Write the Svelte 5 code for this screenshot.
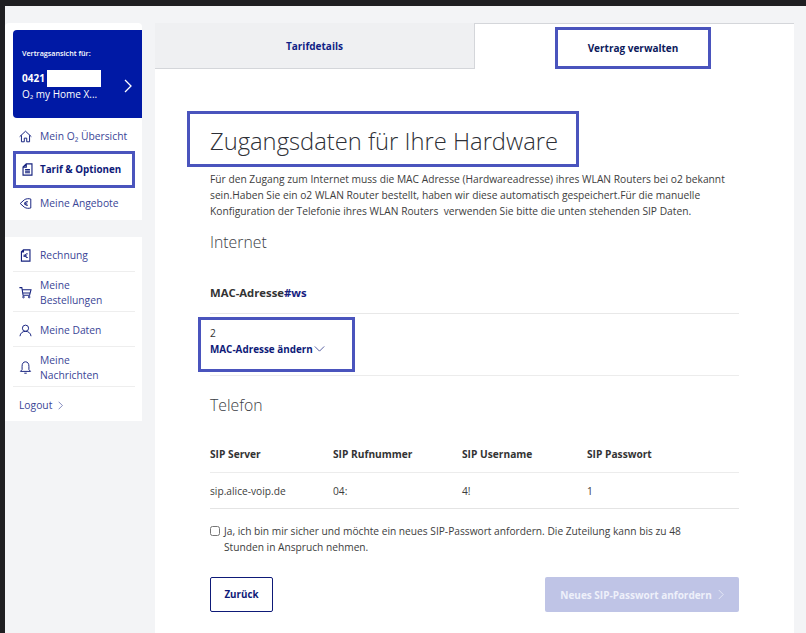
<script>
  const topLinks = [
    { label: 'Mein O₂ Übersicht', icon: 'home' },
    { label: 'Tarif & Optionen', icon: 'doc', active: true },
    { label: 'Meine Angebote', icon: 'tag' }
  ];
  const bottomLinks = [
    { label: 'Rechnung', icon: 'bill' },
    { label: 'Meine Bestellungen', icon: 'cart', two: true },
    { label: 'Meine Daten', icon: 'user' },
    { label: 'Meine Nachrichten', icon: 'bell', two: true }
  ];
  const sipHead = ['SIP Server', 'SIP Rufnummer', 'SIP Username', 'SIP Passwort'];
  const sipRow = ['sip.alice-voip.de', '04:', '4!', '1'];
</script>

{#snippet icon(name)}
  <svg class="ico" viewBox="0 0 16 16" fill="none" stroke="currentColor" stroke-width="1.2">
    {#if name === 'home'}
      <path d="M.8 8.2 8 1.5 15.2 8.2M3 6.5V14.5H6.5V10H9.5V14.5H13V6.5" />
    {:else if name === 'doc'}
      <path d="M6.5 1H13.5V15H2.5V5ZM6.5 1V5H2.5M5 8H11M5 10H11M5 12H11" stroke-width="1.4" />
    {:else if name === 'tag'}
      <path d="M1.5 8 6.5 3.5C9 1.8 12 1.8 14.5 2.5V13.5C12 14.2 9 14.2 6.5 12.5Z" />
      <path d="M11 6A2.4 2.4 0 1 0 11 10M6.5 7.4H10M6.5 8.8H10" />
    {:else if name === 'bill'}
      <path d="M5.5 1H13.5V15H3V3.5ZM5.5 1V3.5H3" stroke-width="1.4" />
      <path d="M10.8 6A2.4 2.4 0 1 0 10.8 10.4M5.5 7.6H9.5M5.5 9H9.5" />
    {:else if name === 'cart'}
      <path d="M.5 2H3.5L5 11.5H13L14.8 4.5H3.9M4.6 8.5H13.8" stroke-width="1.3" />
      <circle cx="5.5" cy="13.6" r="1" />
      <circle cx="12.5" cy="13.6" r="1" />
    {:else if name === 'user'}
      <circle cx="8" cy="5.2" r="3.8" />
      <path d="M1.2 15C1.6 11.2 4.5 9 8 9S14.4 11.2 14.8 15" />
    {:else if name === 'bell'}
      <path d="M8 1C5 1 3.8 3.5 3.8 6.5V10.5L1.8 12.8H14.2L12.2 10.5V6.5C12.2 3.5 11 1 8 1ZM6.5 15H9.5" />
    {/if}
  </svg>
{/snippet}

{#snippet chevron(cls)}
  <svg class={cls} viewBox="0 0 8 14" fill="none" stroke="currentColor" stroke-width="1"><path d="M1 1 7 7 1 13" /></svg>
{/snippet}

<div class="topbar"></div>
<div class="page">
  <aside class="side">
    <div class="card first">
      <div class="contract">
        <div class="small">Vertragsansicht für:</div>
        <div class="contract-row">
          <div>
            <div class="num">0421<span class="mask"></span></div>
            <div class="plan">O₂ my Home X...</div>
          </div>
          {@render chevron('contract-arrow')}
        </div>
      </div>
      {#each topLinks as link}
        <a class="link" class:active={link.active} href="#top">
          {@render icon(link.icon)}
          <span>{link.label}</span>
        </a>
      {/each}
    </div>

    <div class="card second">
      {#each bottomLinks as link}
        <a class="link row" class:two={link.two} href="#top">
          {@render icon(link.icon)}
          <span>{link.label}</span>
        </a>
      {/each}
      <a class="logout" href="#top">Logout {@render chevron('logout-arrow')}</a>
    </div>
  </aside>

  <main class="main">
    <div class="tabs">
      <div class="tab off"><span>Tarifdetails</span></div>
      <div class="tab on"><span class="tab-box">Vertrag verwalten</span></div>
    </div>

    <div class="content">
      <h1>Zugangsdaten für Ihre Hardware</h1>
      <p class="intro">
        Für den Zugang zum Internet muss die MAC Adresse (Hardwareadresse) ihres WLAN Routers bei o2 bekannt
        sein.Haben Sie ein o2 WLAN Router bestellt, haben wir diese automatisch gespeichert.Für die manuelle
        Konfiguration der Telefonie ihres WLAN Routers&nbsp; verwenden Sie bitte die unten stehenden SIP Daten.
      </p>

      <h2>Internet</h2>
      <div class="mac-head"><b>MAC-Adresse</b><b class="blue">#ws</b></div>
      <div class="mac-row">
        <div class="mac-box">
          <div class="mac-val">2</div>
          <a class="mac-link" href="#top">MAC-Adresse ändern
            <svg class="mac-arrow" viewBox="0 0 12 7" fill="none" stroke="currentColor" stroke-width="0.8"><path d="M.5 .5 6 6 11.5 .5" /></svg>
          </a>
        </div>
      </div>

      <h2 class="tel">Telefon</h2>
      <div class="sip head">
        {#each sipHead as h}<b>{h}</b>{/each}
      </div>
      <div class="sip body">
        {#each sipRow as v}<span>{v}</span>{/each}
      </div>

      <label class="check">
        <input type="checkbox" />
        <span>Ja, ich bin mir sicher und möchte ein neues SIP-Passwort anfordern. Die Zuteilung kann bis zu 48 Stunden in Anspruch nehmen.</span>
      </label>

      <div class="actions">
        <button class="back">Zurück</button>
        <button class="submit" disabled>Neues SIP-Passwort anfordern {@render chevron('submit-arrow')}</button>
      </div>
    </div>
  </main>
</div>

<style>
  :global(body) {
    margin: 0;
    background: #f3f4f6;
    font-family: "Open Sans", "Liberation Sans", sans-serif;
    color: #333;
    overflow: hidden;
  }

  a {
    color: inherit;
    text-decoration: none;
  }

  .topbar {
    height: 6px;
    background: #1f1f22;
  }

  .page {
    display: flex;
    height: 627px;
    border-left: 5px solid #1f1f22;
    box-sizing: border-box;
    padding-top: 17px;
  }

  .side {
    width: 137px;
    flex: none;
    display: flex;
    flex-direction: column;
    gap: 17px;
  }

  .card {
    background: #fff;
    border-radius: 4px 4px 0 0;
  }

  .first {
    padding: 7px 0 0 8px;
    height: 197px;
    box-sizing: border-box;
  }

  .contract {
    background: #0019a5;
    color: #fff;
    height: 88px;
    border-radius: 4px 0 0 4px;
    padding: 17px 9px;
    box-sizing: border-box;
    margin-bottom: 3px;
  }

  .small {
    font-size: 7.2px;
    font-weight: 600;
    line-height: 12px;
  }

  .contract-row {
    display: flex;
    justify-content: space-between;
    align-items: center;
    margin-top: 11px;
  }

  .num {
    font-size: 10px;
    font-weight: 700;
    line-height: 16px;
    display: flex;
  }

  .mask {
    width: 54px;
    height: 17px;
    background: #fff;
    margin-left: 2px;
  }

  .plan {
    font-size: 10px;
    line-height: 15px;
  }

  .contract-arrow {
    width: 8px;
    height: 14px;
    stroke-width: 1.3;
    margin-right: 1px;
  }

  .link {
    display: flex;
    align-items: center;
    gap: 8px;
    height: 30px;
    margin-right: 7px;
    padding-left: 6px;
    font-size: 10.3px;
    color: #3a4596;
    box-sizing: border-box;
  }

  .ico {
    width: 13px;
    height: 13px;
    flex: none;
    color: #16227f;
  }

  .link.active {
    height: 37px;
    border: 3px solid #4a54bd;
    padding-left: 5px;
    gap: 6px;
    font-size: 9.8px;
    color: #0e1a78;
    font-weight: 700;
  }

  .second {
    height: 184px;
    padding: 0 7px 0 8px;
    box-sizing: border-box;
    border-radius: 0;
  }

  .row {
    margin-right: 0;
    height: 35px;
    border-bottom: 1px solid #eee;
    padding: 2px 20px 0 6px;
    line-height: 15px;
  }

  .row.two {
    height: 40px;
  }

  .logout {
    display: flex;
    align-items: center;
    gap: 6px;
    height: 34px;
    padding: 2px 0 0 6px;
    box-sizing: border-box;
    font-size: 10.3px;
    color: #3a4596;
  }

  .logout-arrow {
    width: 5px;
    height: 9px;
  }

  .main {
    margin-left: 13px;
    width: 639px;
    flex: none;
    background: #fff;
    align-self: stretch;
  }

  .tabs {
    display: flex;
    height: 46px;
  }

  .tab {
    flex: 1;
    display: flex;
    justify-content: center;
    box-sizing: border-box;
    font-size: 10px;
    font-weight: 700;
  }

  .off {
    width: 320px;
    flex: none;
    background: #eff0f2;
    border-bottom: 1px solid #d4d6da;
    border-right: 1px solid #d4d6da;
    color: #101f86;
    padding-top: 16px;
  }

  .on {
    border-top: 1px solid #d4d6da;
    color: #0d1a5c;
    padding: 3px 3px 0 0;
  }

  .tab-box {
    width: 156px;
    height: 42px;
    border: 3px solid #4a54bd;
    box-sizing: border-box;
    display: flex;
    align-items: center;
    justify-content: center;
  }

  .content {
    padding: 42px 55px 0 55px;
  }

  h1 {
    margin: 0 0 0 -23px;
    width: 392px;
    height: 56px;
    border: 3px solid #4a54bd;
    box-sizing: border-box;
    padding-left: 20px;
    font-size: 23.75px;
    font-weight: 300;
    line-height: 54px;
    color: #2d2f36;
  }

  .intro {
    margin: 4px 0 0;
    font-size: 10.24px;
    line-height: 16px;
    color: #3d3d3d;
    height: 48px;
  }

  h2 {
    margin: 12px 0 0;
    font-size: 15.8px;
    font-weight: 300;
    line-height: 22px;
    color: #3a3d44;
  }

  .mac-head {
    margin-top: 33px;
    padding-bottom: 13px;
    border-bottom: 1px solid #e8e8e8;
    font-size: 11.3px;
    line-height: 14px;
  }

  .blue {
    color: #16227f;
  }

  .mac-row {
    border-bottom: 1px solid #ececec;
    height: 62px;
    padding-top: 3px;
    box-sizing: border-box;
  }

  .mac-box {
    margin-left: -12px;
    width: 157px;
    height: 55px;
    border: 3px solid #4a54bd;
    box-sizing: border-box;
    padding: 5px 0 0 9px;
    font-size: 10.2px;
    line-height: 16px;
  }

  .mac-link {
    color: #0e1a78;
    font-size: 9.9px;
    font-weight: 700;
    display: flex;
    align-items: center;
    gap: 1px;
  }

  .mac-arrow {
    width: 11px;
    height: 6px;
  }

  .tel {
    margin-top: 18px;
  }

  .sip {
    display: grid;
    grid-template-columns: 123px 129px 125px 1fr;
    font-size: 10.2px;
  }

  .sip.head {
    margin-top: 31px;
    padding-bottom: 11px;
    border-bottom: 1px solid #ececec;
    line-height: 14px;
  }

  .sip.body {
    height: 36px;
    align-items: center;
    border-bottom: 1px solid #e4e4e4;
    box-sizing: border-box;
    color: #3d3d3d;
  }

  .check {
    display: flex;
    gap: 4px;
    margin-top: 14px;
    font-size: 10.2px;
    line-height: 16px;
    width: 490px;
    color: #3d3d3d;
  }

  .check input {
    width: 10px;
    height: 10px;
    margin: 3px 0 0 0;
    flex: none;
  }

  .actions {
    display: flex;
    justify-content: space-between;
    margin-top: 22px;
  }

  button {
    font-family: inherit;
    font-weight: 700;
    height: 35px;
    border-radius: 2px;
    padding: 0;
  }

  .back {
    width: 63px;
    background: #fff;
    color: #0e1a78;
    border: 1px solid #0e1a78;
    font-size: 9.8px;
  }

  .submit {
    width: 194px;
    background: #bfc4e6;
    color: #eef0fa;
    border: none;
    display: flex;
    align-items: center;
    justify-content: center;
    gap: 6px;
    font-size: 10px;
  }

  .submit-arrow {
    width: 6px;
    height: 11px;
  }
</style>
